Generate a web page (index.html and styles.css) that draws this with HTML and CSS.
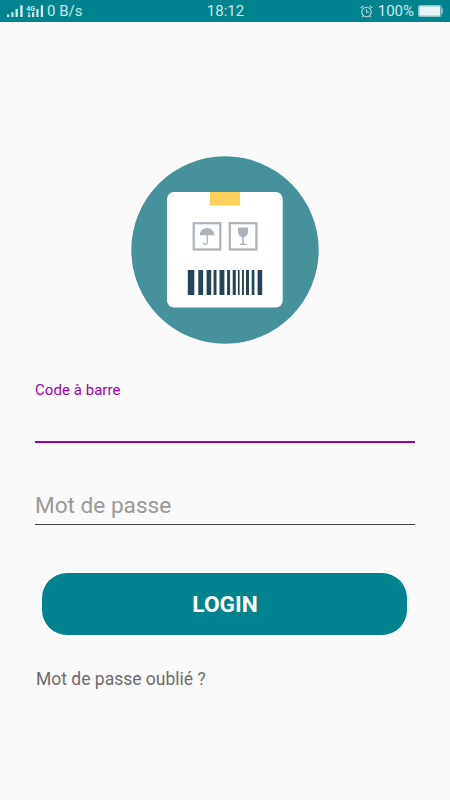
FILE: index.html
```
<!DOCTYPE html>
<html lang="fr">
<head>
	<meta charset="UTF-8">
	<title>Login</title>
	<link rel="stylesheet" href="styles.css">
</head>
<body>
	<div class="status-bar">
		<div class="status-left">
			<svg class="signal" width="38" height="12" viewBox="0 0 38 12">
				<path d="M0 9.500h2.300V12H0zM4.300 7.300h2.300V12H4.300zM8.500 4h2.400v8H8.500zM13.200 .3h2.500V12h-2.500z"/>
				<path d="M21 9.500h2.300V12H21zM25 7.300h2.300V12H25zM29.300 4h2.200v8h-2.200zM33.800 .3h2.300V12h-2.300z"/>
				<path d="M20.200 8.600l1.800-1.600 1.800 1.600z"/>
				<text x="19.200" y="5.600">4G</text>
			</svg>
			<span>0 B/s</span>
		</div>
		<div class="status-time">18:12</div>
		<div class="status-right">
			<svg class="alarm" width="13" height="13" viewBox="0 0 13 13">
				<circle cx="6.500" cy="7" r="4.700"/>
				<path d="M6.500 4.300V7.300H9M.8 3L3.300.8M9.700.8L12.200 3M3 11l-1 1.200M10 11l1 1.200"/>
			</svg>
			<span>100%</span>
			<svg class="battery" width="25" height="12" viewBox="0 0 25 12">
				<rect class="battery-case" x=".5" y=".5" width="22.500" height="11" rx="1"/>
				<rect class="battery-level" x="1.200" y="1.200" width="21" height="9.600"/>
				<path class="battery-cap" d="M23.500 3.500h1.300v5h-1.300z"/>
			</svg>
		</div>
	</div>

	<div class="login">
		<svg class="logo" width="188" height="188" viewBox="131 156 188 188">
			<circle cx="225" cy="250" r="93.700" fill="#45929b"/>
			<rect x="167" y="192" width="115.700" height="115.500" rx="7" fill="#fff"/>
			<path d="M210 192h30v13.500h-30z" fill="#ffd05b"/>
			<!-- parapluie -->
			<rect x="193.700" y="223.200" width="26.600" height="26.300" fill="none" stroke="#acb3ba" stroke-width="2.200"/>
			<path d="M199.600 235.300c.4-4.200 3.500-7.200 7.400-7.200s7 3 7.400 7.200z" fill="#acb3ba"/>
			<path d="M207.200 235v7.500c0 2.500-3.800 2.500-3.800 0" fill="none" stroke="#acb3ba" stroke-width="1.300"/>
			<!-- verre -->
			<rect x="229.800" y="223.200" width="26.600" height="26.300" fill="none" stroke="#acb3ba" stroke-width="2.200"/>
			<path d="M238.300 227.500h9.400c.9 4.800 0 9-3.900 9.800v6.200l2.500.5v1h-6.600v-1l2.500-.5v-6.200c-3.900-.8-4.800-5-3.900-9.800z" fill="#acb3ba"/>
			<!-- code barre -->
			<path d="M187.800 270h6.500v25h-6.500zM198.300 270h4.800v25h-4.800zM206.600 270h4.600v25h-4.600zM213.600 270h2.900v25h-2.900zM219.500 270h4.900v25h-4.900zM227.100 270h3v25h-3zM232.700 270h3.100v25h-3.100zM237.900 270h1.700v25h-1.700zM242 270h1.900v25H242zM246 270h3v25h-3zM251.700 270h2.700v25h-2.700zM257.600 270h4.600v25h-4.600z" fill="#274359"/>
		</svg>

		<div class="field field-active">
			<label class="field-label">Code à barre</label>
		</div>
		<div class="field">
			<label class="field-hint">Mot de passe</label>
		</div>

		<div class="btn-login">LOGIN</div>
		<div class="forgot">Mot de passe oublié ?</div>
	</div>
</body>
</html>
```
FILE: styles.css
```
* {
	box-sizing: border-box;
}
body {
	margin: 0;
	height: 800px;
	background-color: #fafafa;
	font-family: Roboto, sans-serif;
}

/*barre de statut*/
.status-bar {
	display: grid;
	grid-template-columns: 1fr auto 1fr;
	align-items: center;
	height: 22px;
	padding: 0 7px;
	background-color: #00838f;
	color: #cce6e9;
	font-size: 15px;
	line-height: 22px;
}
.status-left,
.status-right {
	display: flex;
	align-items: center;
}
.status-right {
	justify-content: flex-end;
}
.status-time {
	padding: 1px 0 0 1px;
	line-height: 21px;
}
.signal {
	margin-right: 2px;
	fill: #cce6e9;
}
.signal text {
	font-size: 7px;
	font-weight: bold;
}
.alarm {
	margin-right: 5px;
	fill: none;
	stroke: #b5dadd;
	stroke-width: 1.1;
}
.battery {
	margin-left: 4px;
}
.battery-case {
	fill: none;
	stroke: #8cc5ca;
}
.battery-level {
	fill: #e5f3f4;
}
.battery-cap {
	fill: #b5dadd;
}

.login {
	padding: 134px 35px 0;
}
.logo {
	display: block;
	margin: 0 auto;
}

/*champs*/
.field {
	display: flex;
	flex-direction: column;
	justify-content: flex-end;
	height: 82px;
	border-bottom: 1px solid #444;
}
.field-active {
	justify-content: flex-start;
	height: 64px;
	margin-top: 35px;
	border-bottom: 2px solid #9400aa;
}
.field-label {
	padding-top: 2px;
	color: #9c00b0;
	font-size: 15px;
	letter-spacing: .05px;
	line-height: 18px;
}
.field-hint {
	padding-bottom: 5px;
	color: #999;
	font-size: 22.6px;
	line-height: 27px;
}

.btn-login {
	height: 62px;
	margin: 48px 8px 0 7px;
	padding-left: 1px;
	border-radius: 25px;
	background-color: #00838f;
	color: #fff;
	font-size: 22.7px;
	font-weight: bold;
	line-height: 64px;
	text-align: center;
}
.forgot {
	margin: 34px 0 0 1px;
	color: #6b6b6b;
	font-size: 17.5px;
	line-height: 21px;
}
```
